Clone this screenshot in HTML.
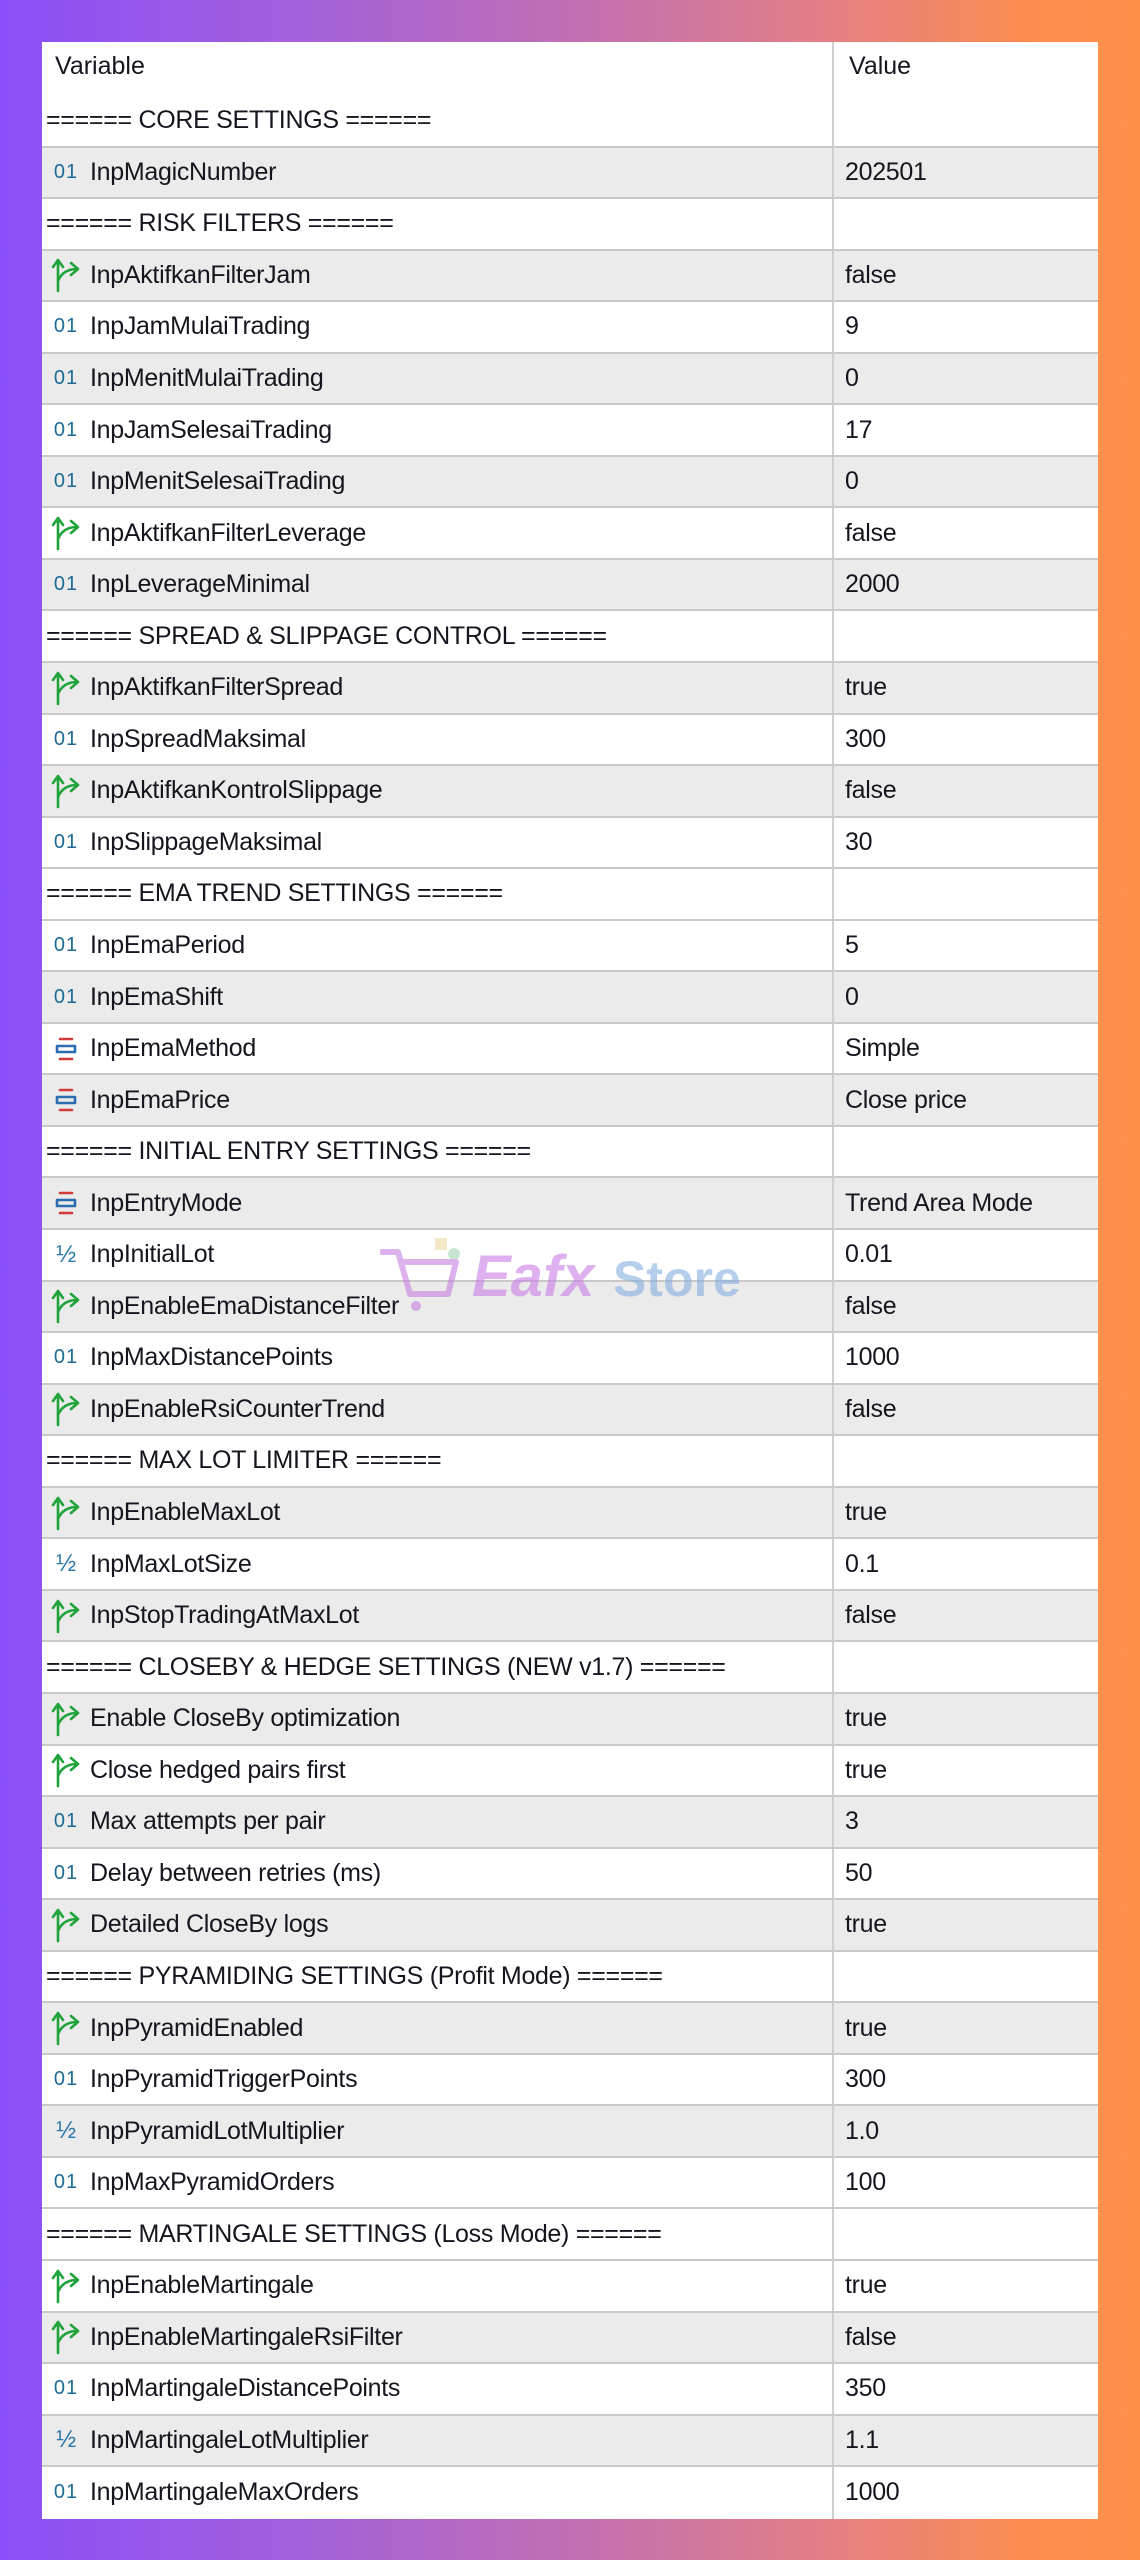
<!DOCTYPE html>
<html><head><meta charset="utf-8"><style>
*{box-sizing:border-box}
html,body{margin:0;padding:0}
body{width:1140px;height:2560px;position:relative;overflow:hidden;
background:linear-gradient(90deg,#8a4ff8 0%,#a25fdc 25%,#c06fb4 50%,#e27f86 72%,#fb8d50 90%,#fe914a 100%);
font-family:"Liberation Sans",sans-serif;color:#15151f}
.t{position:absolute;left:42px;top:42px;width:1056px;background:#fff}
.h{height:54px;display:flex;font-size:25px}
.h div{padding-top:10px}
.r{height:51.55px;border-bottom:2px solid #c9c9c9;display:flex;align-items:center;font-size:25px;background:#fff;letter-spacing:-0.3px}
.r.g{background:#ebebeb}
.n{width:792px;flex:none;display:flex;align-items:center;height:100%;border-right:2px solid #cfcfcf;white-space:nowrap}
.v{padding-left:11px}
.ic{width:48px;display:inline-flex;justify-content:center;align-items:center;flex:none}
.i01{color:#1d6b95;font-size:20px;letter-spacing:1px}
.half{color:#2a76a8;font-size:24px}
.grp{padding-left:4px;font-size:25px}
.wm{position:absolute;left:380px;top:1232px;width:380px;height:80px;opacity:.6;pointer-events:none}
</style></head><body>
<div class="t">
<div class="h"><div style="width:792px;padding-left:13px;border-right:2px solid #cfcfcf">Variable</div><div style="padding-left:15px">Value</div></div>

<div class="r"><div class="n grp">====== CORE SETTINGS ======</div><div class="v"></div></div>
<div class="r g"><div class="n"><span class="ic i01">01</span>InpMagicNumber</div><div class="v">202501</div></div>
<div class="r"><div class="n grp">====== RISK FILTERS ======</div><div class="v"></div></div>
<div class="r g"><div class="n"><span class="ic"><svg width="30" height="36" viewBox="0 0 30 36"><g fill="none" stroke="#1fa33a" stroke-width="2.6" stroke-linecap="round" stroke-linejoin="round"><path d="M7 34V4M2 10L7 3L12 10M7 24Q12 12 26 12M20 6L27 12L20 18"/></g></svg></span>InpAktifkanFilterJam</div><div class="v">false</div></div>
<div class="r"><div class="n"><span class="ic i01">01</span>InpJamMulaiTrading</div><div class="v">9</div></div>
<div class="r g"><div class="n"><span class="ic i01">01</span>InpMenitMulaiTrading</div><div class="v">0</div></div>
<div class="r"><div class="n"><span class="ic i01">01</span>InpJamSelesaiTrading</div><div class="v">17</div></div>
<div class="r g"><div class="n"><span class="ic i01">01</span>InpMenitSelesaiTrading</div><div class="v">0</div></div>
<div class="r"><div class="n"><span class="ic"><svg width="30" height="36" viewBox="0 0 30 36"><g fill="none" stroke="#1fa33a" stroke-width="2.6" stroke-linecap="round" stroke-linejoin="round"><path d="M7 34V4M2 10L7 3L12 10M7 24Q12 12 26 12M20 6L27 12L20 18"/></g></svg></span>InpAktifkanFilterLeverage</div><div class="v">false</div></div>
<div class="r g"><div class="n"><span class="ic i01">01</span>InpLeverageMinimal</div><div class="v">2000</div></div>
<div class="r"><div class="n grp">====== SPREAD &amp; SLIPPAGE CONTROL ======</div><div class="v"></div></div>
<div class="r g"><div class="n"><span class="ic"><svg width="30" height="36" viewBox="0 0 30 36"><g fill="none" stroke="#1fa33a" stroke-width="2.6" stroke-linecap="round" stroke-linejoin="round"><path d="M7 34V4M2 10L7 3L12 10M7 24Q12 12 26 12M20 6L27 12L20 18"/></g></svg></span>InpAktifkanFilterSpread</div><div class="v">true</div></div>
<div class="r"><div class="n"><span class="ic i01">01</span>InpSpreadMaksimal</div><div class="v">300</div></div>
<div class="r g"><div class="n"><span class="ic"><svg width="30" height="36" viewBox="0 0 30 36"><g fill="none" stroke="#1fa33a" stroke-width="2.6" stroke-linecap="round" stroke-linejoin="round"><path d="M7 34V4M2 10L7 3L12 10M7 24Q12 12 26 12M20 6L27 12L20 18"/></g></svg></span>InpAktifkanKontrolSlippage</div><div class="v">false</div></div>
<div class="r"><div class="n"><span class="ic i01">01</span>InpSlippageMaksimal</div><div class="v">30</div></div>
<div class="r"><div class="n grp">====== EMA TREND SETTINGS ======</div><div class="v"></div></div>
<div class="r"><div class="n"><span class="ic i01">01</span>InpEmaPeriod</div><div class="v">5</div></div>
<div class="r g"><div class="n"><span class="ic i01">01</span>InpEmaShift</div><div class="v">0</div></div>
<div class="r"><div class="n"><span class="ic"><svg width="28" height="28" viewBox="0 0 28 28"><g stroke-width="2.6" stroke-linecap="round" fill="none"><path d="M8 4H20M8 24H20" stroke="#d23a3a"/><path d="M5 11H23M5 17H23M5 11V17M23 11V17" stroke="#2a6db0"/></g></svg></span>InpEmaMethod</div><div class="v">Simple</div></div>
<div class="r g"><div class="n"><span class="ic"><svg width="28" height="28" viewBox="0 0 28 28"><g stroke-width="2.6" stroke-linecap="round" fill="none"><path d="M8 4H20M8 24H20" stroke="#d23a3a"/><path d="M5 11H23M5 17H23M5 11V17M23 11V17" stroke="#2a6db0"/></g></svg></span>InpEmaPrice</div><div class="v">Close price</div></div>
<div class="r"><div class="n grp">====== INITIAL ENTRY SETTINGS ======</div><div class="v"></div></div>
<div class="r g"><div class="n"><span class="ic"><svg width="28" height="28" viewBox="0 0 28 28"><g stroke-width="2.6" stroke-linecap="round" fill="none"><path d="M8 4H20M8 24H20" stroke="#d23a3a"/><path d="M5 11H23M5 17H23M5 11V17M23 11V17" stroke="#2a6db0"/></g></svg></span>InpEntryMode</div><div class="v">Trend Area Mode</div></div>
<div class="r"><div class="n"><span class="ic half">½</span>InpInitialLot</div><div class="v">0.01</div></div>
<div class="r g"><div class="n"><span class="ic"><svg width="30" height="36" viewBox="0 0 30 36"><g fill="none" stroke="#1fa33a" stroke-width="2.6" stroke-linecap="round" stroke-linejoin="round"><path d="M7 34V4M2 10L7 3L12 10M7 24Q12 12 26 12M20 6L27 12L20 18"/></g></svg></span>InpEnableEmaDistanceFilter</div><div class="v">false</div></div>
<div class="r"><div class="n"><span class="ic i01">01</span>InpMaxDistancePoints</div><div class="v">1000</div></div>
<div class="r g"><div class="n"><span class="ic"><svg width="30" height="36" viewBox="0 0 30 36"><g fill="none" stroke="#1fa33a" stroke-width="2.6" stroke-linecap="round" stroke-linejoin="round"><path d="M7 34V4M2 10L7 3L12 10M7 24Q12 12 26 12M20 6L27 12L20 18"/></g></svg></span>InpEnableRsiCounterTrend</div><div class="v">false</div></div>
<div class="r"><div class="n grp">====== MAX LOT LIMITER ======</div><div class="v"></div></div>
<div class="r g"><div class="n"><span class="ic"><svg width="30" height="36" viewBox="0 0 30 36"><g fill="none" stroke="#1fa33a" stroke-width="2.6" stroke-linecap="round" stroke-linejoin="round"><path d="M7 34V4M2 10L7 3L12 10M7 24Q12 12 26 12M20 6L27 12L20 18"/></g></svg></span>InpEnableMaxLot</div><div class="v">true</div></div>
<div class="r"><div class="n"><span class="ic half">½</span>InpMaxLotSize</div><div class="v">0.1</div></div>
<div class="r g"><div class="n"><span class="ic"><svg width="30" height="36" viewBox="0 0 30 36"><g fill="none" stroke="#1fa33a" stroke-width="2.6" stroke-linecap="round" stroke-linejoin="round"><path d="M7 34V4M2 10L7 3L12 10M7 24Q12 12 26 12M20 6L27 12L20 18"/></g></svg></span>InpStopTradingAtMaxLot</div><div class="v">false</div></div>
<div class="r"><div class="n grp">====== CLOSEBY &amp; HEDGE SETTINGS (NEW v1.7) ======</div><div class="v"></div></div>
<div class="r g"><div class="n"><span class="ic"><svg width="30" height="36" viewBox="0 0 30 36"><g fill="none" stroke="#1fa33a" stroke-width="2.6" stroke-linecap="round" stroke-linejoin="round"><path d="M7 34V4M2 10L7 3L12 10M7 24Q12 12 26 12M20 6L27 12L20 18"/></g></svg></span>Enable CloseBy optimization</div><div class="v">true</div></div>
<div class="r"><div class="n"><span class="ic"><svg width="30" height="36" viewBox="0 0 30 36"><g fill="none" stroke="#1fa33a" stroke-width="2.6" stroke-linecap="round" stroke-linejoin="round"><path d="M7 34V4M2 10L7 3L12 10M7 24Q12 12 26 12M20 6L27 12L20 18"/></g></svg></span>Close hedged pairs first</div><div class="v">true</div></div>
<div class="r g"><div class="n"><span class="ic i01">01</span>Max attempts per pair</div><div class="v">3</div></div>
<div class="r"><div class="n"><span class="ic i01">01</span>Delay between retries (ms)</div><div class="v">50</div></div>
<div class="r g"><div class="n"><span class="ic"><svg width="30" height="36" viewBox="0 0 30 36"><g fill="none" stroke="#1fa33a" stroke-width="2.6" stroke-linecap="round" stroke-linejoin="round"><path d="M7 34V4M2 10L7 3L12 10M7 24Q12 12 26 12M20 6L27 12L20 18"/></g></svg></span>Detailed CloseBy logs</div><div class="v">true</div></div>
<div class="r"><div class="n grp">====== PYRAMIDING SETTINGS (Profit Mode) ======</div><div class="v"></div></div>
<div class="r g"><div class="n"><span class="ic"><svg width="30" height="36" viewBox="0 0 30 36"><g fill="none" stroke="#1fa33a" stroke-width="2.6" stroke-linecap="round" stroke-linejoin="round"><path d="M7 34V4M2 10L7 3L12 10M7 24Q12 12 26 12M20 6L27 12L20 18"/></g></svg></span>InpPyramidEnabled</div><div class="v">true</div></div>
<div class="r"><div class="n"><span class="ic i01">01</span>InpPyramidTriggerPoints</div><div class="v">300</div></div>
<div class="r g"><div class="n"><span class="ic half">½</span>InpPyramidLotMultiplier</div><div class="v">1.0</div></div>
<div class="r"><div class="n"><span class="ic i01">01</span>InpMaxPyramidOrders</div><div class="v">100</div></div>
<div class="r"><div class="n grp">====== MARTINGALE SETTINGS (Loss Mode) ======</div><div class="v"></div></div>
<div class="r"><div class="n"><span class="ic"><svg width="30" height="36" viewBox="0 0 30 36"><g fill="none" stroke="#1fa33a" stroke-width="2.6" stroke-linecap="round" stroke-linejoin="round"><path d="M7 34V4M2 10L7 3L12 10M7 24Q12 12 26 12M20 6L27 12L20 18"/></g></svg></span>InpEnableMartingale</div><div class="v">true</div></div>
<div class="r g"><div class="n"><span class="ic"><svg width="30" height="36" viewBox="0 0 30 36"><g fill="none" stroke="#1fa33a" stroke-width="2.6" stroke-linecap="round" stroke-linejoin="round"><path d="M7 34V4M2 10L7 3L12 10M7 24Q12 12 26 12M20 6L27 12L20 18"/></g></svg></span>InpEnableMartingaleRsiFilter</div><div class="v">false</div></div>
<div class="r"><div class="n"><span class="ic i01">01</span>InpMartingaleDistancePoints</div><div class="v">350</div></div>
<div class="r g"><div class="n"><span class="ic half">½</span>InpMartingaleLotMultiplier</div><div class="v">1.1</div></div>
<div class="r" style="border-bottom:none"><div class="n"><span class="ic i01">01</span>InpMartingaleMaxOrders</div><div class="v">1000</div></div>
</div>

<svg class="wm" viewBox="0 0 380 80">
<rect x="55" y="6" width="12" height="12" fill="#e6d08a" opacity=".8"/>
<circle cx="74" cy="22" r="6" fill="#8cc8a0" opacity=".8"/>
<g fill="none" stroke="#c77ee0" stroke-width="6" stroke-linecap="round" stroke-linejoin="round"><path d="M2 20H18L30 62H68L76 30H22"/></g>
<circle cx="36" cy="74" r="5" fill="#c77ee0"/>
<text x="92" y="64" font-family="Liberation Sans,sans-serif" font-size="58" font-weight="bold" font-style="italic" fill="#c97de6">Eafx</text>
<text x="233" y="64" font-family="Liberation Sans,sans-serif" font-size="50" font-weight="bold" fill="#84aede">Store</text>
</svg>
</body></html>
